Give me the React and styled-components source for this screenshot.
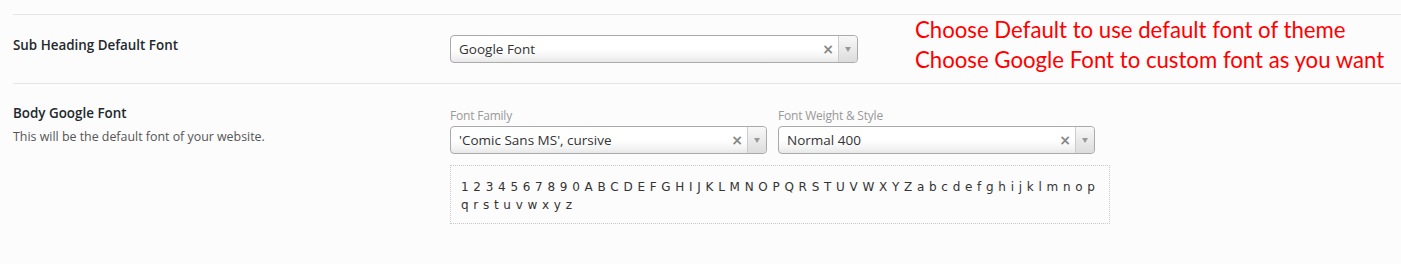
import React from "react";
import styled, { createGlobalStyle } from "styled-components";

const Global = createGlobalStyle`
  html, body { margin: 0; padding: 0; background: #fcfcfc; }
  body { font-family: "Open Sans", "Noto Sans", sans-serif; color: #23282d; }
`;

const Page = styled.div`
  padding: 14px 0 0 13px;
  height: 250px;
`;

const Row = styled.div`
  display: grid;
  grid-template-columns: 437px 1fr;
  border-top: 1px solid #e5e5e5;
  padding: ${(p) => p.$pad || "20px 0"};
`;

const LabelCol = styled.div`
  padding-top: ${(p) => p.$top || "0"};
`;

const Label = styled.div`
  font-size: 13.4px;
  font-weight: 600;
  line-height: 20px;
  color: #23282d;
`;

const Desc = styled.div`
  font-size: 12.4px;
  line-height: 18px;
  margin-top: 5px;
  color: #555;
`;

const Select = styled.div`
  width: ${(p) => p.$w}px;
  height: 28px;
  box-sizing: border-box;
  border: 1px solid #aaa;
  border-radius: 4px;
  background: linear-gradient(#fff 0%, #fff 50%, #f4f4f4 80%, #e8e8e8 100%);
  display: flex;
  align-items: center;
  font-size: 13.5px;
  color: #333;
  flex-shrink: 0;
`;

const SelectText = styled.span`
  flex: 1;
  padding-left: 8px;
  white-space: nowrap;
  overflow: hidden;
`;

const Clear = styled.span`
  width: 18px;
  text-align: center;
  font-size: 14px;
  font-weight: 700;
  color: #888;
  font-family: "DejaVu Sans", sans-serif;
  margin-right: 1px;
`;

const Arrow = styled.span`
  width: 18px;
  height: 100%;
  border-left: 1px solid #ccc;
  border-radius: 0 4px 4px 0;
  background: linear-gradient(#f8f8f8, #dcdcdc);
  display: flex;
  align-items: center;
  justify-content: center;
  &::after {
    content: "";
    border-left: 3px solid transparent;
    border-right: 3px solid transparent;
    border-top: 5px solid #999;
  }
`;

const Note = styled.div`
  font-family: Lato, "Open Sans", sans-serif;
  font-size: 22.2px;
  line-height: 30px;
  color: #ff0000;
  margin-top: -16px;
  margin-bottom: -40px;
  margin-left: 57px;
  white-space: nowrap;
`;

const FirstField = styled.div`
  display: flex;
  align-items: flex-start;
`;

const Column = styled.div`
  display: flex;
  flex-direction: column;
  padding-top: ${(p) => p.$top || "0"};
`;

const SmallLabel = styled.div`
  font-size: 12px;
  line-height: 16px;
  color: #999;
  margin-bottom: 2px;
  letter-spacing: -0.2px;
`;

const Preview = styled.div`
  width: 660px;
  box-sizing: border-box;
  margin-top: 11px;
  border: 1px dotted #c8c8c8;
  padding: 12px 10px 9px 10px;
  font-family: "DejaVu Sans", sans-serif;
  font-size: 12px;
  line-height: 18px;
  color: #333;
  word-spacing: 0.9px;
`;

const PreviewLine = styled.div`
  white-space: nowrap;
`;

const Selects = styled.div`
  display: flex;
  gap: 11px;
`;

const chars1 = "1234567890ABCDEFGHIJKLMNOPQRSTUVWXYZabcdefghijklmnop".split("").join(" ");
const chars2 = "qrstuvwxyz".split("").join(" ");

function SelectBox({ w, children }) {
  return (
    <Select $w={w}>
      <SelectText>{children}</SelectText>
      <Clear>×</Clear>
      <Arrow />
    </Select>
  );
}

export default function App() {
  return (
    <Page>
      <Global />
      <Row $pad="16px 0 20px">
        <LabelCol $top="4px">
          <Label>Sub Heading Default Font</Label>
        </LabelCol>
        <FirstField>
          <Column $top="4px">
            <SelectBox w={408}>Google Font</SelectBox>
          </Column>
          <Note>
            Choose Default to use default font of theme
            <br />
            Choose Google Font to custom font as you want
          </Note>
        </FirstField>
      </Row>
      <Row $pad="19px 0 20px">
        <LabelCol>
          <Label>Body Google Font</Label>
          <Desc>This will be the default font of your website.</Desc>
        </LabelCol>
        <Column $top="5px">
          <Selects>
            <Column>
              <SmallLabel>Font Family</SmallLabel>
              <SelectBox w={317}>'Comic Sans MS', cursive</SelectBox>
            </Column>
            <Column>
              <SmallLabel>Font Weight &amp; Style</SmallLabel>
              <SelectBox w={317}>Normal 400</SelectBox>
            </Column>
          </Selects>
          <Preview>
            <PreviewLine>{chars1}</PreviewLine>
            <PreviewLine>{chars2}</PreviewLine>
          </Preview>
        </Column>
      </Row>
    </Page>
  );
}
